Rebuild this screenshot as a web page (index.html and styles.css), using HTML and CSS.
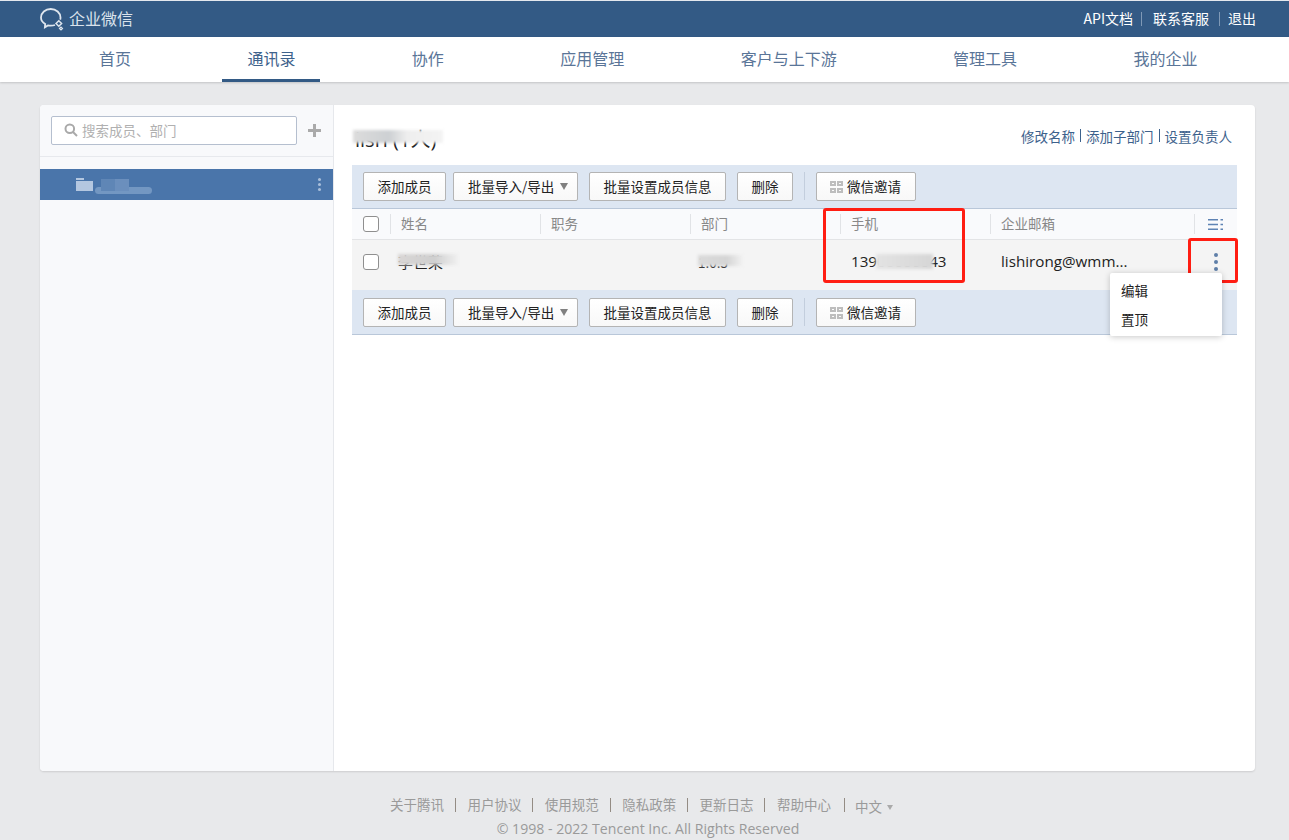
FILE: index.html
```html
<!DOCTYPE html>
<html lang="zh-CN">
<head>
    <meta charset="UTF-8">
    <meta name="viewport" content="width=device-width, initial-scale=1.0">
    <title>企业微信</title>
    <link rel="stylesheet" href="styles.css">
</head>
<body>
    <header class="topbar">
        <div class="logo">
            <svg class="logo-icon" width="26" height="24" viewBox="0 0 26 24" fill="none" stroke="#dfe6ee" stroke-width="1.8">
                <path d="M15 18c-1.300.5-2.800.7-4.300.7-1 0-1.900-.1-2.800-.3l-3 1.900.3-3.300C2.500 15.500 1 13.200 1 10.600 1 5.900 5.300 2 10.700 2S20.500 5.900 20.500 10.600c0 .7-.1 1.400-.3 2"/>
                <path d="M16 16.500l2.800-2.800 2.800 2.800-2.800 2.800z" stroke-width="1.500"/>
                <path d="M19.500 21.500l1.500-1.500 1.500 1.500-1.500 1.500z" stroke-width="1.200"/>
            </svg>
            <span>企业微信</span>
        </div>
        <div class="top-links">
            <a>API文档</a><i></i><a>联系客服</a><i></i><a>退出</a>
        </div>
    </header>

    <nav class="mainnav">
        <a>首页</a>
        <a class="active">通讯录</a>
        <a>协作</a>
        <a>应用管理</a>
        <a>客户与上下游</a>
        <a>管理工具</a>
        <a>我的企业</a>
    </nav>

    <main class="card">
        <aside class="sidebar">
            <div class="search-row">
                <div class="search">
                    <svg width="14" height="14" viewBox="0 0 14 14" fill="none" stroke="#a9a9a9" stroke-width="2">
                        <circle cx="5.800" cy="5.800" r="4.300"/>
                        <path d="M9 9l4 4"/>
                    </svg>
                    <span>搜索成员、部门</span>
                </div>
                <div class="plus"></div>
            </div>
            <div class="tree-item">
                <svg width="17" height="13" viewBox="0 0 17 13" fill="#b4c7e0">
                    <path d="M0 0h8v2H0zM0 3h17v10H0z"/>
                </svg>
                <span class="tree-smudge"></span>
                <span class="tree-dots"><b></b><b></b><b></b></span>
            </div>
        </aside>

        <section class="content">
            <div class="title-row">
                <h1>lisri (1人)<span class="smudge title-smudge"></span></h1>
                <div class="dept-links">
                    <a>修改名称</a><i></i><a>添加子部门</a><i></i><a>设置负责人</a>
                </div>
            </div>

            <div class="table-wrap">
                <div class="toolbar">
                    <button class="btn">添加成员</button>
                    <button class="btn btn-drop">批量导入/导出<em></em></button>
                    <button class="btn btn-batch">批量设置成员信息</button>
                    <button class="btn">删除</button>
                    <span class="tool-sep"></span>
                    <button class="btn btn-qr">
                        <svg width="13" height="12" viewBox="0 0 13 12" fill="#bdbdbd">
                            <path d="M0 0h6v5H0zM2 2v1h2V2zM7 0h6v5H7zM9 2v1h2V2zM0 7h6v5H0zM2 9v1h2V9zM7 7h6v5H7zM9 9v1h2V9z" fill-rule="evenodd"/>
                        </svg>
                        微信邀请
                    </button>
                </div>

                <div class="table-head">
                    <div class="cell-check"><span class="checkbox"></span></div>
                    <div class="th">姓名</div>
                    <div class="th">职务</div>
                    <div class="th">部门</div>
                    <div class="th">手机</div>
                    <div class="th th-mail">企业邮箱</div>
                    <div class="th th-cols">
                        <svg width="15" height="11" viewBox="0 0 15 11" fill="#5e83b4">
                            <path d="M0 0h10v1.500H0zM0 4.700h10v1.500H0zM0 9.400h10v1.500H0zM12.500 0H15v1.500h-2.500zM12.500 4.700H15v1.500h-2.500zM12.500 9.400H15v1.500h-2.500z"/>
                        </svg>
                    </div>
                </div>

                <div class="table-row">
                    <div class="cell-check"><span class="checkbox"></span></div>
                    <div class="td"><span class="masked">李世荣<span class="smudge name-smudge"></span></span></div>
                    <div class="td"></div>
                    <div class="td"><span class="masked">1.0.5<span class="smudge dept-smudge"></span></span></div>
                    <div class="td latin"><span class="masked">13900000043<span class="smudge phone-smudge"></span></span></div>
                    <div class="td latin td-mail">lishirong@wmm...</div>
                    <div class="td td-more"><span class="more-dots"><b></b><b></b><b></b></span></div>
                </div>

                <div class="toolbar toolbar-bottom">
                    <button class="btn">添加成员</button>
                    <button class="btn btn-drop">批量导入/导出<em></em></button>
                    <button class="btn btn-batch">批量设置成员信息</button>
                    <button class="btn">删除</button>
                    <span class="tool-sep"></span>
                    <button class="btn btn-qr">
                        <svg width="13" height="12" viewBox="0 0 13 12" fill="#bdbdbd">
                            <path d="M0 0h6v5H0zM2 2v1h2V2zM7 0h6v5H7zM9 2v1h2V2zM0 7h6v5H0zM2 9v1h2V9zM7 7h6v5H7zM9 9v1h2V9z" fill-rule="evenodd"/>
                        </svg>
                        微信邀请
                    </button>
                </div>

                <div class="mark mark-phone"></div>
                <div class="mark mark-more"></div>
                <ul class="row-menu">
                    <li>编辑</li>
                    <li>置顶</li>
                </ul>
            </div>
        </section>
    </main>

    <footer class="footer">
        <div class="footer-links">
            <a>关于腾讯</a><i></i><a>用户协议</a><i></i><a>使用规范</a><i></i><a>隐私政策</a><i></i><a>更新日志</a><i></i><a>帮助中心</a><i class="wide"></i><a class="lang">中文<em></em></a>
        </div>
        <div class="copyright">© 1998 - 2022 Tencent Inc. All Rights Reserved</div>
    </footer>
</body>
</html>
```

FILE: styles.css
```css
* {
    box-sizing: border-box;
}
html, body {
    height: 100%;
    overflow: hidden;
}
body {
    margin: 0;
    background-color: #e8e9eb;
    color: #222;
    font-family: "Noto Sans CJK SC", "Open Sans", sans-serif;
    font-size: 13.5px;
}

.topbar {
    display: flex;
    justify-content: space-between;
    align-items: center;
    height: 37px;
    padding: 0 33px 2px 40px;
    background-color: #335a85;
    border-top: 1px solid #e4e8ee;
    color: #fff;
}
.logo {
    display: flex;
    align-items: center;
    gap: 3px;
    font-size: 16px;
    color: #dbe3ec;
}
.logo-icon {
    margin-top: 2px;
}
.top-links {
    display: flex;
    align-items: center;
    font-size: 14px;
}
.top-links i {
    width: 1px;
    height: 14px;
    margin: 2px 11px 0 8px;
    background-color: #7f99b6;
}
.top-links i:last-of-type {
    margin: 2px 8px 0 10px;
}

.mainnav {
    display: flex;
    gap: 66.4px;
    height: 45px;
    padding-left: 74px;
    background-color: #fff;
    box-shadow: 0 1px 2px rgba(0, 0, 0, 0.16);
}
.mainnav a {
    padding: 0 25px;
    height: 45px;
    line-height: 42px;
    font-size: 16px;
    color: #5a7598;
}
.mainnav a.active {
    color: #3e628c;
    border-bottom: 3px solid #335a85;
}

.card {
    display: flex;
    width: 1215px;
    height: 666px;
    margin: 23px 0 0 40px;
    background-color: #fff;
    border-radius: 4px;
    box-shadow: 0 1px 2px rgba(0, 0, 0, 0.12);
    overflow: hidden;
}

.sidebar {
    width: 294px;
    background-color: #f8f9fb;
    border-right: 1px solid #e6e8ec;
}
.search-row {
    display: flex;
    align-items: center;
    height: 52px;
    padding: 11px 0 11px 11px;
    border-bottom: 1px solid #e7e9ed;
}
.search {
    display: flex;
    align-items: center;
    gap: 4px;
    width: 246px;
    height: 29px;
    padding: 0 0 2px 12px;
    background-color: #fff;
    border: 1px solid #b5bfcf;
    border-radius: 2px;
    color: #b0b0b0;
}
.search svg {
    margin-top: 1px;
}
.plus {
    position: relative;
    width: 13px;
    height: 13px;
    margin-left: 11px;
    background:
        linear-gradient(#aaa, #aaa) center / 13px 3px no-repeat,
        linear-gradient(#aaa, #aaa) center / 3px 13px no-repeat;
}
.tree-item {
    display: flex;
    align-items: center;
    height: 31px;
    margin-top: 12px;
    padding: 0 12px 1px 36px;
    background-color: #4a75aa;
}
.tree-smudge {
    position: relative;
    width: 57px;
    height: 7px;
    margin: 13px 0 0 2px;
    background-color: #7397c2;
    border-radius: 4px;
}
.tree-smudge::before {
    content: "";
    position: absolute;
    left: 6px;
    top: -8px;
    width: 28px;
    height: 12px;
    background: linear-gradient(90deg, #5f86b6 0%, #5f86b6 50%, #6b8fbd 51%, #6b8fbd 100%);
}
.tree-dots {
    display: flex;
    flex-direction: column;
    gap: 2px;
    margin-left: auto;
}
.tree-dots b {
    width: 3px;
    height: 3px;
    border-radius: 50%;
    background-color: #a9bfdb;
}

.content {
    flex: 1;
    padding: 0 18px;
}
.title-row {
    display: flex;
    justify-content: space-between;
    height: 60px;
    padding-top: 20px;
}
.title-row h1 {
    position: relative;
    margin: 0 0 0 3px;
    font-family: "Open Sans", "Noto Sans CJK SC", sans-serif;
    font-size: 20px;
    font-weight: 400;
    line-height: 30px;
    color: #222;
}
.smudge {
    position: absolute;
    filter: blur(1.500px);
}
.title-smudge {
    left: -2px;
    top: 5px;
    width: 90px;
    height: 13px;
    background: linear-gradient(90deg, #dcdcdc 0%, #cdd0d3 40%, #eee 60%, #f3f3f3 100%);
}
.dept-links {
    display: flex;
    align-items: flex-start;
    margin-right: 5px;
    padding-top: 1px;
    color: #3c618c;
}
.dept-links i {
    width: 1px;
    height: 13px;
    margin: 3px 5px 0;
    background-color: #3c618c;
}

.table-wrap {
    position: relative;
    width: 885px;
}
.toolbar {
    display: flex;
    align-items: flex-start;
    height: 44px;
    padding: 7px 0 0 11px;
    background-color: #dde6f2;
    border-bottom: 1px solid #b9c7d9;
}
.toolbar-bottom {
    height: 45px;
    padding-top: 8px;
}
.btn {
    height: 29px;
    margin-right: 7px;
    padding: 0 13.5px 2px;
    background: linear-gradient(#fff, #f8f8f8);
    border: 1px solid #b4b4b4;
    border-radius: 2px;
    color: #222;
    font: inherit;
    white-space: nowrap;
}
.btn-drop {
    width: 125px;
    margin-right: 11px;
    padding: 0 0 2px 14px;
    text-align: left;
}
.btn-drop em {
    display: inline-block;
    margin-left: 6px;
    vertical-align: 2px;
    border-left: 4px solid transparent;
    border-right: 4px solid transparent;
    border-top: 7px solid #808080;
}
.btn-batch {
    width: 137px;
    margin-right: 11px;
    padding: 0 0 2px;
}
.tool-sep {
    width: 1px;
    height: 28px;
    margin: 0 11px 0 4px;
    background-color: #c3cedd;
}
.btn-qr {
    display: flex;
    align-items: center;
    gap: 4px;
    width: 100px;
    padding-left: 13px;
}
.btn-qr svg {
    margin-top: 2px;
}

.table-head, .table-row {
    display: grid;
    grid-template-columns: 38px 150px 150px 150px 150px 204px 43px;
    align-items: center;
}
.table-head {
    height: 31px;
    background-color: #f9fafc;
    border-bottom: 1px solid #e3e4e6;
    color: #888;
}
.table-row {
    height: 50px;
    background-color: #f4f4f4;
    padding-bottom: 7px;
}
.cell-check {
    padding-left: 11px;
    line-height: 0;
}
.checkbox {
    display: inline-block;
    width: 16px;
    height: 16px;
    background-color: #fff;
    border: 1px solid #8f8f8f;
    border-radius: 3px;
}
.th {
    height: 20px;
    padding-left: 10px;
    border-left: 1px solid #e1e3e6;
    line-height: 18px;
}
.td {
    padding-left: 11px;
}
.td:nth-child(2) {
    padding-left: 8px;
}
.td:nth-child(4) {
    padding-left: 8px;
}
.latin {
    margin-top: -2px;
    font-family: "Open Sans", sans-serif;
    font-size: 15.2px;
    color: #222;
}
.td-mail {
    padding-left: 11px;
    white-space: nowrap;
}
.th-cols {
    display: flex;
    align-items: center;
    padding-left: 13px;
}
.td-more {
    padding-left: 20px;
}
.masked {
    position: relative;
    display: inline-block;
    white-space: nowrap;
}
.td:nth-child(2) .masked {
    font-size: 15px;
}
.name-smudge {
    left: 0;
    top: 3px;
    width: 60px;
    height: 11px;
    background: linear-gradient(90deg, #d9d6d5 0%, #cfcfcf 60%, #f0f0f0 100%);
}
.dept-smudge {
    left: 0;
    top: 3px;
    width: 45px;
    height: 11px;
    background: linear-gradient(90deg, #dadada 0%, #d5d5d5 65%, #f2f2f2 100%);
}
.phone-smudge {
    left: 25px;
    top: 3px;
    width: 57px;
    height: 15px;
    background: linear-gradient(90deg, #e3e3e3 0%, #d6d6d6 100%);
}
.more-dots {
    display: flex;
    flex-direction: column;
    gap: 3px;
}
.more-dots b {
    width: 4px;
    height: 4px;
    border-radius: 50%;
    background-color: #5f7fa8;
}

.mark {
    position: absolute;
    border: 3px solid #ff1d12;
    border-radius: 3px;
}
.mark-phone {
    left: 471px;
    top: 43px;
    width: 142px;
    height: 75px;
}
.mark-more {
    left: 836px;
    top: 73px;
    width: 50px;
    height: 45px;
}
.row-menu {
    position: absolute;
    left: 758px;
    top: 108px;
    width: 112px;
    height: 63px;
    margin: 0;
    padding: 4px 0;
    list-style: none;
    background-color: #fff;
    border-radius: 2px;
    box-shadow: 0 1px 6px rgba(0, 0, 0, 0.22);
}
.row-menu li {
    height: 29px;
    padding-left: 11px;
    line-height: 26px;
    color: #222;
}

.footer {
    padding-top: 22px;
    color: #9a9a9a;
    text-align: center;
}
.footer-links {
    display: flex;
    align-items: center;
    height: 22px;
    padding-left: 390px;
    font-size: 13.5px;
}
.footer-links i {
    width: 1px;
    height: 14px;
    margin: 1px 11.5px 0 10.9px;
    background-color: #948c84;
}
.footer-links i.wide {
    margin: 1px 10px 0 13px;
}
.lang {
    margin-top: 3px;
}
.lang em {
    display: inline-block;
    margin-left: 5px;
    vertical-align: 2px;
    border-left: 3px solid transparent;
    border-right: 3px solid transparent;
    border-top: 5px solid #aaa;
}
.copyright {
    margin-top: 4px;
    padding-left: 7px;
    font-family: "Open Sans", sans-serif;
    font-size: 14.1px;
    line-height: 20px;
}
```
